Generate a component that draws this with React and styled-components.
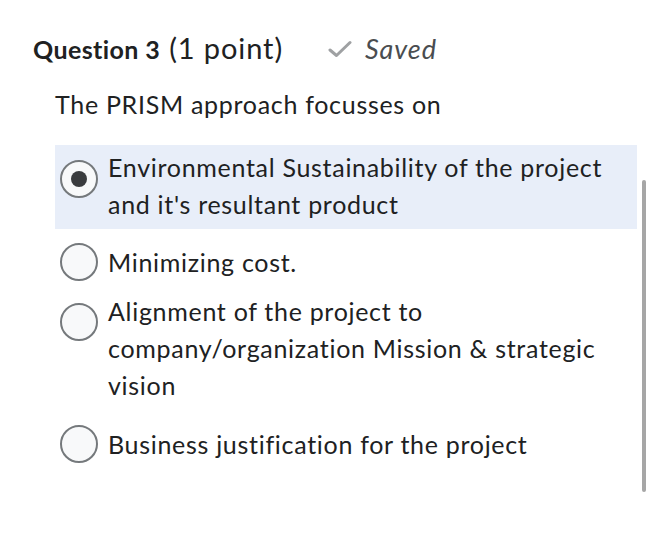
import React from 'react';
import styled, { createGlobalStyle } from 'styled-components';

const GlobalStyle = createGlobalStyle`
  body {
    margin: 0;
    background: #ffffff;
    font-family: Lato, "Open Sans", sans-serif;
    font-variant-ligatures: none;
    color: #202122;
  }
`;

const Page = styled.div`
  width: 651px;
  height: 558px;
  padding: 30px 0 0 33px;
  box-sizing: border-box;
  position: relative;
`;

const Header = styled.div`
  display: flex;
  align-items: baseline;
  line-height: 36px;
`;

const QuestionNo = styled.span`
  font-weight: 700;
  font-size: 25px;
  letter-spacing: 0.4px;
`;

const Points = styled.span`
  font-size: 29px;
  letter-spacing: 0.9px;
  margin-left: 9px;
`;

const SavedNote = styled.span`
  display: inline-flex;
  align-items: baseline;
  margin-left: 45px;
  font-style: italic;
  font-size: 27px;
  letter-spacing: 0.9px;
  color: #4a4d50;

  svg {
    margin-right: 13px;
    align-self: center;
  }
`;

const Prompt = styled.p`
  margin: 19px 0 0 22px;
  font-size: 25px;
  letter-spacing: 0.7px;
  line-height: 36px;
`;

const Options = styled.div`
  margin: 23px 0 0 22px;
  width: 582px;
  display: flex;
  flex-direction: column;
`;

const Option = styled.label`
  display: flex;
  align-items: flex-start;
  padding: ${p => (p.$selected ? '4px 0 6px 5px' : '0 0 0 5px')};
  margin-bottom: ${p => p.$gap}px;
  background: ${p => (p.$selected ? '#e8eef9' : 'transparent')};
`;

const Radio = styled.span`
  flex: none;
  width: 38px;
  height: 38px;
  box-sizing: border-box;
  border-radius: 50%;
  border: 2px solid #75797c;
  background: #f8f9fa;
  margin-top: ${p => p.$offset}px;
  display: flex;
  align-items: center;
  justify-content: center;

  &::after {
    content: '';
    width: 16px;
    height: 16px;
    border-radius: 50%;
    background: #3a3c3e;
    display: ${p => (p.$checked ? 'block' : 'none')};
  }
`;

const OptionText = styled.span`
  margin-left: 10px;
  font-size: 25px;
  letter-spacing: 0.7px;
  line-height: 37px;
  color: #202122;
`;

const ScrollBar = styled.div`
  position: absolute;
  left: 642px;
  top: 180px;
  width: 4px;
  height: 312px;
  background: #a6a6a6;
  border-radius: 2px;
`;

const options = [
  { text: "Environmental Sustainability of the project and it's resultant product", selected: true, gap: 15, offset: 11 },
  { text: 'Minimizing cost.', gap: 12, offset: -1 },
  { text: 'Alignment of the project to company/organization Mission & strategic vision', gap: 22, offset: 10 },
  { text: 'Business justification for the project', gap: 0, offset: -1 },
];

export default function App() {
  return (
    <Page>
      <GlobalStyle />
      <Header>
        <QuestionNo>Question 3</QuestionNo>
        <Points>(1 point)</Points>
        <SavedNote>
          <svg width="24" height="18" viewBox="0 0 24 18">
            <path d="M2 10 L8.5 15.5 L22 2.5" fill="none" stroke="#9fa1a3" strokeWidth="3" strokeLinecap="round" strokeLinejoin="round" />
          </svg>
          Saved
        </SavedNote>
      </Header>
      <Prompt>The PRISM approach focusses on</Prompt>
      <Options>
        {options.map(o => (
          <Option key={o.text} $selected={o.selected} $gap={o.gap}>
            <Radio $checked={o.selected} $offset={o.offset} />
            <OptionText>{o.text}</OptionText>
          </Option>
        ))}
      </Options>
      <ScrollBar />
    </Page>
  );
}
